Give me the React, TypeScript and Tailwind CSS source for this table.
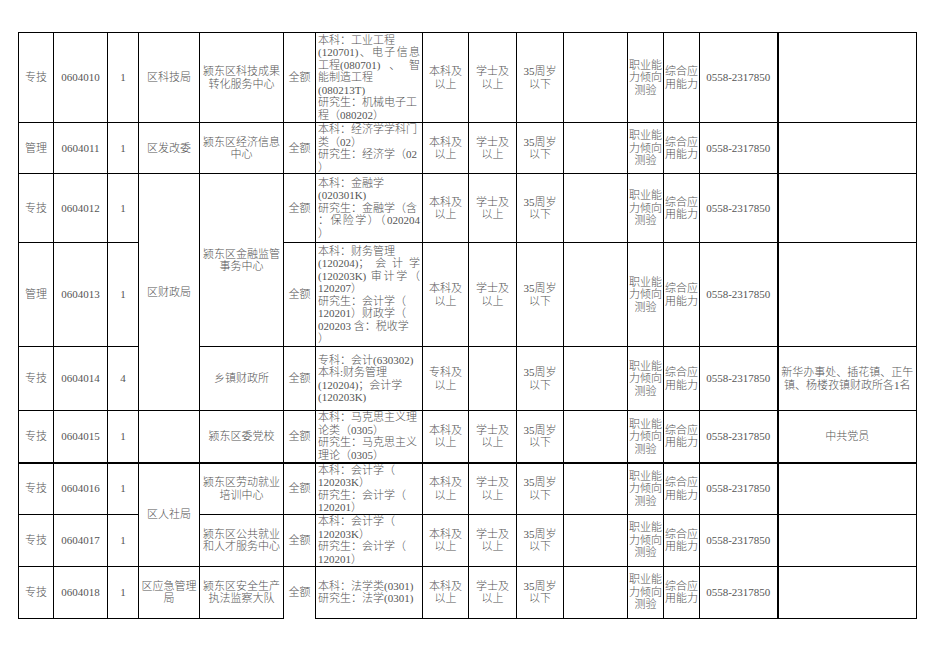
import React from "react";

type Line = { t: string; j?: boolean; segs?: string[] };

const base = "border border-black p-0";

function C({
  lines,
  rs,
  cls = "",
}: {
  lines: string[];
  rs?: number;
  cls?: string;
}) {
  return (
    <td rowSpan={rs} className={`${base} text-center align-middle ${cls}`}>
      {lines.map((l, i) => (
        <div key={i} className="whitespace-nowrap">
          {l}
        </div>
      ))}
    </td>
  );
}

function M({ lines, cls = "" }: { lines: Line[]; cls?: string }) {
  return (
    <td className={`${base} text-left align-middle pl-[2px] pr-[2px] ${cls}`}>
      {lines.map((l, i) =>
        l.segs ? (
          <div key={i} className="flex justify-between whitespace-nowrap">
            {l.segs.map((s, k) => (
              <span key={k}>{s}</span>
            ))}
          </div>
        ) : (
          <div
            key={i}
            className={
              l.j
                ? "text-justify [text-align-last:justify] whitespace-nowrap"
                : "whitespace-nowrap"
            }
          >
            {l.t}
          </div>
        )
      )}
    </td>
  );
}

function Row({
  h,
  type,
  code,
  n,
  dept,
  unit,
  major,
  edu = ["本科及", "以上"],
  deg = ["学士及", "以上"],
  note = [],
  thick = false,
  lastFull = false,
}: {
  h: string;
  type: string;
  code: string;
  n: string;
  dept?: React.ReactNode;
  unit?: React.ReactNode;
  major: Line[];
  edu?: string[];
  deg?: string[];
  note?: string[];
  thick?: boolean;
  lastFull?: boolean;
}) {
  const t = thick ? "border-t-2" : "";
  return (
    <tr className={h}>
      <C lines={[type]} cls={t} />
      <C lines={[code]} cls={t} />
      <C lines={[n]} cls={t} />
      {dept}
      {unit}
      <C lines={["全额"]} cls={`${t} ${lastFull ? "border-b-0" : ""}`} />
      <M lines={major} cls={t} />
      <C lines={edu} cls={t} />
      <C lines={deg} cls={t} />
      <C lines={["35周岁", "以下"]} cls={t} />
      <C lines={[]} cls={t} />
      <C lines={["职业能", "力倾向", "测验"]} cls={t} />
      <C lines={["综合应", "用能力"]} cls={t} />
      <C lines={["0558-2317850"]} cls={t} />
      <C lines={note} cls={`border-l-2 ${t}`} />
    </tr>
  );
}

export default function App() {
  return (
    <div className="min-h-[662px] w-[936px] bg-white pt-[32px] pl-[18px] font-['Liberation_Serif','Noto_Sans_CJK_SC',serif] font-light text-[11px] leading-[12.5px] text-[#555]">
      <table className="table-fixed border-collapse w-[898px]">
        <colgroup>
          <col className="w-[35px]" />
          <col className="w-[54px]" />
          <col className="w-[31px]" />
          <col className="w-[61px]" />
          <col className="w-[84px]" />
          <col className="w-[32px]" />
          <col className="w-[107px]" />
          <col className="w-[46px]" />
          <col className="w-[48px]" />
          <col className="w-[47px]" />
          <col className="w-[64px]" />
          <col className="w-[36px]" />
          <col className="w-[36px]" />
          <col className="w-[78px]" />
          <col className="w-[139px]" />
        </colgroup>
        <tbody>
          <Row
            h="h-[90px]"
            type="专技"
            code="0604010"
            n="1"
            dept={<C lines={["区科技局"]} />}
            unit={<C lines={["颍东区科技成果", "转化服务中心"]} />}
            major={[
              { t: "本科：工业工程" },
              { t: "(120701)、电子信息", j: true },
              { t: "", segs: ["工程(080701)", "、", "智"] },
              { t: "能制造工程" },
              { t: "(080213T)" },
              { t: "研究生：机械电子工" },
              { t: "程（080202）" },
            ]}
          />
          <Row
            h="h-[51px]"
            type="管理"
            code="0604011"
            n="1"
            dept={<C lines={["区发改委"]} />}
            unit={<C lines={["颍东区经济信息", "中心"]} />}
            major={[
              { t: "本科：经济学学科门" },
              { t: "类（02）" },
              { t: "研究生：经济学（02" },
              { t: "）" },
            ]}
          />
          <Row
            h="h-[69px]"
            type="专技"
            code="0604012"
            n="1"
            dept={<C lines={["区财政局"]} rs={3} />}
            unit={<C lines={["颍东区金融监管", "事务中心"]} rs={2} />}
            major={[
              { t: "本科：金融学" },
              { t: "(020301K)" },
              { t: "研究生：金融学（含" },
              { t: "：保险学）（020204", j: true },
              { t: "）" },
            ]}
          />
          <Row
            h="h-[104px]"
            type="管理"
            code="0604013"
            n="1"
            major={[
              { t: "本科：财务管理" },
              { t: "(120204)；会计学", j: true },
              { t: "(120203K) 审计学（", j: true },
              { t: "120207）" },
              { t: "研究生：会计学（" },
              { t: "120201）财政学（" },
              { t: "020203 含：税收学" },
              { t: "）" },
            ]}
          />
          <Row
            h="h-[64px]"
            type="专技"
            code="0604014"
            n="4"
            unit={<C lines={["乡镇财政所"]} />}
            major={[
              { t: "专科：会计(630302)" },
              { t: "本科:财务管理" },
              { t: "(120204)；会计学" },
              { t: "(120203K)" },
            ]}
            edu={["专科及", "以上"]}
            deg={[]}
            note={["新华办事处、插花镇、正午", "镇、杨楼孜镇财政所各1名"]}
          />
          <Row
            h="h-[52px]"
            type="专技"
            code="0604015"
            n="1"
            dept={<C lines={[]} />}
            unit={<C lines={["颍东区委党校"]} />}
            major={[
              { t: "本科：马克思主义理" },
              { t: "论类（0305）" },
              { t: "研究生：马克思主义" },
              { t: "理论（0305）" },
            ]}
            note={["中共党员"]}
          />
          <Row
            h="h-[51px]"
            type="专技"
            code="0604016"
            n="1"
            thick
            dept={<C lines={["区人社局"]} rs={2} cls="border-t-2" />}
            unit={<C lines={["颍东区劳动就业", "培训中心"]} cls="border-t-2" />}
            major={[
              { t: "本科：会计学（" },
              { t: "120203K）" },
              { t: "研究生：会计学（" },
              { t: "120201）" },
            ]}
          />
          <Row
            h="h-[52px]"
            type="专技"
            code="0604017"
            n="1"
            unit={<C lines={["颍东区公共就业", "和人才服务中心"]} />}
            major={[
              { t: "本科：会计学（" },
              { t: "120203K）" },
              { t: "研究生：会计学（" },
              { t: "120201）" },
            ]}
          />
          <Row
            h="h-[52px]"
            type="专技"
            code="0604018"
            n="1"
            lastFull
            dept={<C lines={["区应急管理", "局"]} />}
            unit={<C lines={["颍东区安全生产", "执法监察大队"]} />}
            major={[
              { t: "本科：法学类(0301)" },
              { t: "研究生：法学(0301)" },
            ]}
          />
        </tbody>
      </table>
    </div>
  );
}
